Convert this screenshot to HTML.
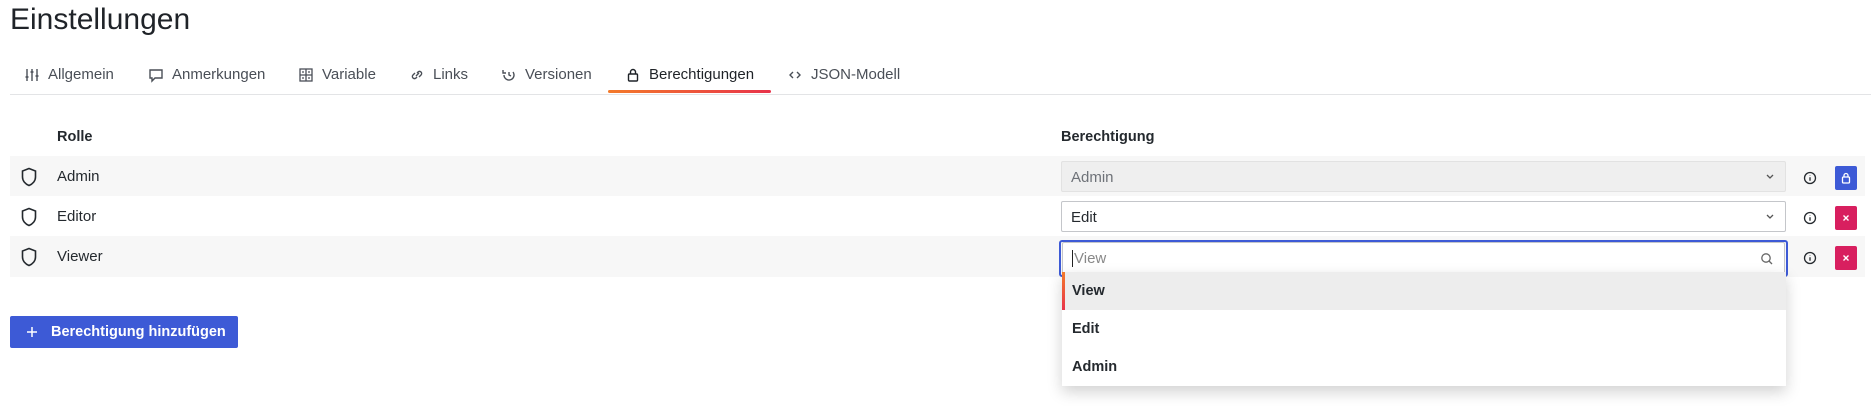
<!DOCTYPE html>
<html><head><meta charset="utf-8"><style>
*{box-sizing:border-box;margin:0;padding:0}
body{width:1871px;height:406px;background:#fff;font-family:"Liberation Sans",sans-serif;color:#24292e;position:relative;overflow:hidden}
.a{position:absolute}
h1{position:absolute;left:10px;top:3px;font-size:30px;font-weight:400;color:#1f2328}
.tab{position:absolute;top:66px;font-size:15px;color:#4a4f57;line-height:18px;white-space:nowrap}
.tab svg{position:absolute;left:-24px;top:1px}
.row{position:absolute;left:10px;width:1855px;height:40px}
.sh{position:absolute;left:20px;top:11px}
.rt{position:absolute;left:47px;top:11px;font-size:15px;color:#24292e}
.sel{position:absolute;left:1061px;width:725px;height:31px;border:1px solid #c4c6ca;border-radius:2px;font-size:15px;padding:7px 9px;background:#fff}
.chev{position:absolute;right:10px;top:11px}
.info{position:absolute;left:1803px}
.btn{position:absolute;left:1835px;width:22px;height:24px;border-radius:2px}
.opt{position:absolute;left:1062px;width:724px;height:38px;font-size:14.5px;font-weight:700;padding:11px 10px;color:#24292e}
</style></head><body>
<h1>Einstellungen</h1>

<div class="tab" style="left:48px"><svg width="16" height="16" viewBox="0 0 16 16" fill="none" stroke="#4a4f57" stroke-width="1.4"><path d="M3 2v12M8 2v12M13 2v12M1.5 10h3M6.5 5h3M11.5 9h3"/></svg>Allgemein</div>
<div class="tab" style="left:172px"><svg width="16" height="16" viewBox="0 0 16 16" fill="none" stroke="#4a4f57" stroke-width="1.4"><path d="M2 3h12v8H7l-3 3v-3H2z"/></svg>Anmerkungen</div>
<div class="tab" style="left:322px"><svg width="16" height="16" viewBox="0 0 16 16" fill="none" stroke="#4a4f57" stroke-width="1.3"><rect x="2" y="2" width="12" height="12"/><path d="M8 2v12M2 8h12M4 5h2M10 5h2M4 11h2M10 11h2"/></svg>Variable</div>
<div class="tab" style="left:433px"><svg width="16" height="16" viewBox="0 0 16 16" fill="none" stroke="#4a4f57" stroke-width="1.4"><path d="M7 9l3-3M6 6L4 8a2 2 0 003 3l1-1M10 10l2-2a2 2 0 00-3-3L8 6"/></svg>Links</div>
<div class="tab" style="left:525px"><svg width="16" height="16" viewBox="0 0 16 16" fill="none" stroke="#4a4f57" stroke-width="1.4"><path d="M3 8a5 5 0 109-3M2 3v3h3M8 5v3l2 1"/></svg>Versionen</div>
<div class="tab" style="left:649px;color:#1f2328"><svg width="16" height="16" viewBox="0 0 16 16" fill="none" stroke="#1f2328" stroke-width="1.4"><rect x="3.5" y="7" width="9" height="7" rx="1"/><path d="M5.5 7V5a2.5 2.5 0 015 0v2"/></svg>Berechtigungen</div>
<div class="tab" style="left:811px"><svg width="16" height="16" viewBox="0 0 16 16" fill="none" stroke="#4a4f57" stroke-width="1.4"><path d="M6 5L3 8l3 3M10 5l3 3-3 3"/></svg>JSON-Modell</div>
<div class="a" style="left:608px;top:90px;width:163px;height:3px;border-radius:2px;background:linear-gradient(90deg,#f37a2a,#e8334a)"></div>
<div class="a" style="left:10px;top:94px;width:1861px;height:1px;background:#e3e4e6"></div>

<div class="a" style="left:57px;top:129px;font-size:14.5px;font-weight:700;color:#24292e">Rolle</div>
<div class="a" style="left:1061px;top:129px;font-size:14.5px;font-weight:700;color:#24292e">Berechtigung</div>

<div class="row" style="top:156px;background:#f7f7f7"></div>
<div class="row" style="top:236px;background:#f7f7f7;height:41px"></div>

<svg class="a" style="left:20px;top:167px" width="18" height="20" viewBox="0 0 18 20" fill="none" stroke="#24292e" stroke-width="1.6"><path d="M9 1.5L2.5 4v6c0 4 3 7 6.5 8.5C12.5 17 15.5 14 15.5 10V4z"/></svg>
<svg class="a" style="left:20px;top:207px" width="18" height="20" viewBox="0 0 18 20" fill="none" stroke="#24292e" stroke-width="1.6"><path d="M9 1.5L2.5 4v6c0 4 3 7 6.5 8.5C12.5 17 15.5 14 15.5 10V4z"/></svg>
<svg class="a" style="left:20px;top:247px" width="18" height="20" viewBox="0 0 18 20" fill="none" stroke="#24292e" stroke-width="1.6"><path d="M9 1.5L2.5 4v6c0 4 3 7 6.5 8.5C12.5 17 15.5 14 15.5 10V4z"/></svg>
<div class="a" style="left:57px;top:168px;font-size:15px">Admin</div>
<div class="a" style="left:57px;top:208px;font-size:15px">Editor</div>
<div class="a" style="left:57px;top:248px;font-size:15px">Viewer</div>

<div class="sel" style="top:161px;background:#efefef;border-color:#e2e2e2;color:#6e7278">Admin<svg class="chev" width="10" height="8" viewBox="0 0 10 8" fill="none" stroke="#555" stroke-width="1.3"><path d="M2 2l3 3 3-3"/></svg></div>
<div class="sel" style="top:201px">Edit<svg class="chev" width="10" height="8" viewBox="0 0 10 8" fill="none" stroke="#555" stroke-width="1.3"><path d="M2 2l3 3 3-3"/></svg></div>
<div class="a" style="left:1059px;top:240px;width:729px;height:37px;border:2px solid #3d5ad6;border-radius:3px"></div>
<div class="sel" style="top:242px;left:1062px;width:723px;height:32px;border-color:#c4c6ca;color:#888"><span style="border-left:1px solid #222;padding-left:1px">View</span><svg class="chev" style="top:9px" width="14" height="14" viewBox="0 0 14 14" fill="none" stroke="#666" stroke-width="1.3"><circle cx="6" cy="6" r="4.2"/><path d="M9 9l3 3"/></svg></div>

<svg class="info" style="top:171px" width="14" height="14" viewBox="0 0 14 14" fill="none" stroke="#24292e" stroke-width="1.3"><circle cx="7" cy="7" r="5.5"/><path d="M7 6.3v3.5M7 4.2v.4"/></svg>
<svg class="info" style="top:211px" width="14" height="14" viewBox="0 0 14 14" fill="none" stroke="#24292e" stroke-width="1.3"><circle cx="7" cy="7" r="5.5"/><path d="M7 6.3v3.5M7 4.2v.4"/></svg>
<svg class="info" style="top:251px" width="14" height="14" viewBox="0 0 14 14" fill="none" stroke="#24292e" stroke-width="1.3"><circle cx="7" cy="7" r="5.5"/><path d="M7 6.3v3.5M7 4.2v.4"/></svg>
<div class="btn" style="top:166px;background:#3d5ad6"><svg width="22" height="24" viewBox="0 0 22 24" fill="none" stroke="#fff" stroke-width="1.3"><rect x="7.5" y="11" width="7" height="6" rx="1"/><path d="M9 11V9.5a2 2 0 014 0V11"/></svg></div>
<div class="btn" style="top:206px;background:#d81f5f"><svg width="22" height="24" viewBox="0 0 22 24" fill="none" stroke="#fff" stroke-width="1.4"><path d="M8.5 9.5l5 5M13.5 9.5l-5 5"/></svg></div>
<div class="btn" style="top:246px;background:#d81f5f"><svg width="22" height="24" viewBox="0 0 22 24" fill="none" stroke="#fff" stroke-width="1.4"><path d="M8.5 9.5l5 5M13.5 9.5l-5 5"/></svg></div>

<div class="a" style="left:1062px;top:272px;width:724px;height:114px;background:#fff;box-shadow:0 6px 14px rgba(0,0,0,0.18)"></div>
<div class="opt" style="top:272px;background:#ededed"><span class="a" style="left:0;top:0;width:3px;height:38px;background:linear-gradient(#f37a2a,#e8334a)"></span>View</div>
<div class="opt" style="top:310px">Edit</div>
<div class="opt" style="top:348px">Admin</div>

<div class="a" style="left:10px;top:316px;width:228px;height:32px;background:#3d5ad6;border-radius:2px;color:#fff;font-size:14.5px;font-weight:700;padding:8px 0 0 41px">Berechtigung hinzufügen<svg class="a" style="left:16px;top:10px" width="12" height="12" viewBox="0 0 12 12" stroke="#fff" stroke-width="1.5"><path d="M6 1v10M1 6h10"/></svg></div>
</body></html>
